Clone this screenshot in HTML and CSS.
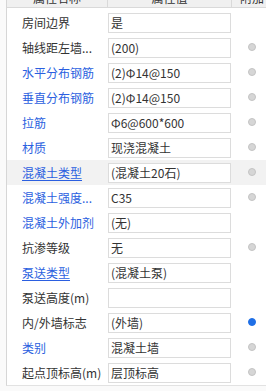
FILE: index.html
```html
<!DOCTYPE html>
<html>
<head>
<meta charset="utf-8">
<link rel="stylesheet" href="styles.css">
</head>
<body>
<div class="panel">
  <div class="head">
    <div class="hc c1">属性名称</div>
    <div class="hc c2">属性值</div>
    <div class="hc c3">附加</div>
  </div>
  <div class="rows">
    <div class="row"><div class="lab">房间边界</div><div class="val"><span class="box">是</span></div><div class="ext"></div></div>
    <div class="row"><div class="lab">轴线距左墙...</div><div class="val"><span class="box">(200)</span></div><div class="ext"><i class="dot"></i></div></div>
    <div class="row"><div class="lab blue">水平分布钢筋</div><div class="val"><span class="box">(2)Φ14@150</span></div><div class="ext"><i class="dot"></i></div></div>
    <div class="row"><div class="lab blue">垂直分布钢筋</div><div class="val"><span class="box">(2)Φ14@150</span></div><div class="ext"><i class="dot"></i></div></div>
    <div class="row"><div class="lab blue">拉筋</div><div class="val"><span class="box">Φ6@600*600</span></div><div class="ext"><i class="dot"></i></div></div>
    <div class="row"><div class="lab blue">材质</div><div class="val"><span class="box">现浇混凝土</span></div><div class="ext"><i class="dot"></i></div></div>
    <div class="row hl"><div class="lab blue ul">混凝土类型</div><div class="val"><span class="box">(混凝土20石)</span></div><div class="ext"><i class="dot"></i></div></div>
    <div class="row"><div class="lab blue">混凝土强度...</div><div class="val"><span class="box">C35</span></div><div class="ext"><i class="dot"></i></div></div>
    <div class="row"><div class="lab blue">混凝土外加剂</div><div class="val"><span class="box">(无)</span></div><div class="ext"></div></div>
    <div class="row"><div class="lab">抗渗等级</div><div class="val"><span class="box">无</span></div><div class="ext"><i class="dot"></i></div></div>
    <div class="row"><div class="lab blue ul">泵送类型</div><div class="val"><span class="box">(混凝土泵)</span></div><div class="ext"></div></div>
    <div class="row"><div class="lab">泵送高度(m)</div><div class="val"><span class="box"></span></div><div class="ext"></div></div>
    <div class="row"><div class="lab">内/外墙标志</div><div class="val"><span class="box">(外墙)</span></div><div class="ext"><i class="dot on"></i></div></div>
    <div class="row"><div class="lab blue">类别</div><div class="val"><span class="box">混凝土墙</span></div><div class="ext"><i class="dot"></i></div></div>
    <div class="row"><div class="lab">起点顶标高(m)</div><div class="val"><span class="box">层顶标高</span></div><div class="ext"><i class="dot"></i></div></div>
  </div>
</div>
</body>
</html>
```
FILE: styles.css
```css
html, body {
  margin: 0;
  padding: 0;
  background: #fafafa;
  overflow: hidden;
}
body {
  width: 266px;
  height: 391px;
  font-family: "Noto Sans CJK SC", "Noto Sans", sans-serif;
  font-size: 12px;
  color: #333;
}
.panel {
  margin-left: 6px;
  margin-top: -12px;
  width: 259px;
  overflow: hidden;
  border-left: 1px solid #d6d6d6;
  border-bottom: 1px solid #e2e2e2;
  background: #fff;
}
.head {
  display: flex;
  height: 19px;
  background: #f0f0f0;
  border-bottom: 1px solid #d9d9d9;
}
.hc {
  flex: none;
  line-height: 19px;
  text-align: center;
  color: #333;
}
.c1 { width: 100px; border-right: 1px solid #d9d9d9; }
.c2 { width: 123px; border-right: 1px solid #d9d9d9; }
.c3 { width: 40px; text-align: left; padding-left: 8px; }
.rows {
  padding-top: 2px;
}
.row {
  display: flex;
  align-items: center;
  height: 25px;
}
.row.hl {
  background: #f2f2f2;
}
.lab {
  flex: none;
  width: 85px;
  padding-left: 15px;
  white-space: nowrap;
  overflow: hidden;
  color: #333;
}
.lab.blue { color: #2b5fe0; }
.lab.ul { text-decoration: underline; text-decoration-color: #2b5fe0; text-underline-offset: 2px; }
.val {
  flex: none;
  width: 124px;
  display: flex;
  padding-left: 1px;
  box-sizing: border-box;
}
.box {
  display: block;
  width: 123px;
  height: 20px;
  box-sizing: border-box;
  border: 1px solid #dcdcdc;
  background: #fff;
  padding-left: 2px;
  line-height: 18px;
  color: #333;
  white-space: nowrap;
  overflow: hidden;
}
.ext {
  flex: none;
  width: 35px;
  display: flex;
  padding-left: 17px;
  box-sizing: border-box;
}
.dot {
  display: block;
  width: 8px;
  height: 8px;
  border-radius: 50%;
  box-sizing: border-box;
  background: #d6d6d6;
  border: 1px solid #c4c4c4;
  margin-top: -2px;
}
.dot.on {
  background: #1f6fe6;
  border-color: #1f6fe6;
}
```
